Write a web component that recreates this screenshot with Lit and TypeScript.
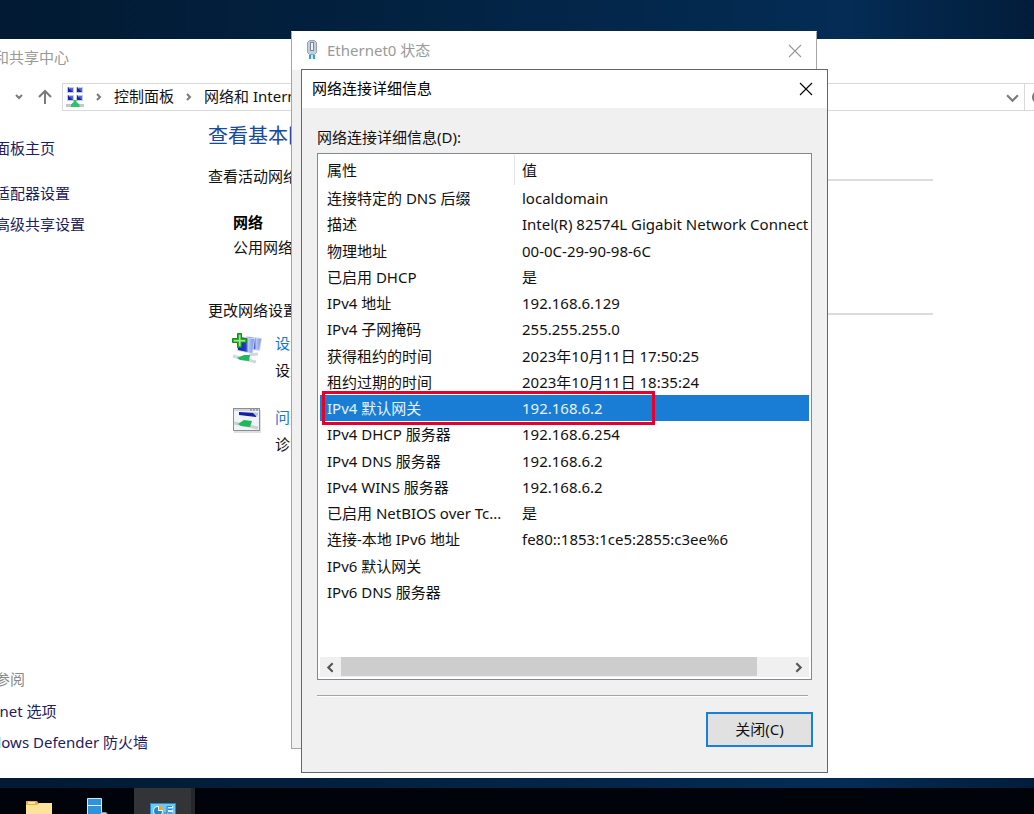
import { LitElement, html, css, svg, nothing } from "lit";
import { customElement, property } from "lit/decorators.js";

interface Detail {
  name: string;
  value: string;
  selected?: boolean;
}

const DETAILS: Detail[] = [
  { name: "连接特定的 DNS 后缀", value: "localdomain" },
  { name: "描述", value: "Intel(R) 82574L Gigabit Network Connection" },
  { name: "物理地址", value: "00-0C-29-90-98-6C" },
  { name: "已启用 DHCP", value: "是" },
  { name: "IPv4 地址", value: "192.168.6.129" },
  { name: "IPv4 子网掩码", value: "255.255.255.0" },
  { name: "获得租约的时间", value: "2023年10月11日 17:50:25" },
  { name: "租约过期的时间", value: "2023年10月11日 18:35:24" },
  { name: "IPv4 默认网关", value: "192.168.6.2", selected: true },
  { name: "IPv4 DHCP 服务器", value: "192.168.6.254" },
  { name: "IPv4 DNS 服务器", value: "192.168.6.2" },
  { name: "IPv4 WINS 服务器", value: "192.168.6.2" },
  { name: "已启用 NetBIOS over Tc...", value: "是" },
  { name: "连接-本地 IPv6 地址", value: "fe80::1853:1ce5:2855:c3ee%6" },
  { name: "IPv6 默认网关", value: "" },
  { name: "IPv6 DNS 服务器", value: "" },
];

const base = css`
  :host,
  * {
    box-sizing: border-box;
  }
  button {
    font: inherit;
    color: inherit;
    background: none;
    border: 0;
    padding: 0;
    display: flex;
    align-items: center;
    justify-content: center;
  }
  a {
    text-decoration: none;
    color: inherit;
  }
  h1,
  h2,
  p {
    margin: 0;
    font-weight: 400;
    font-size: inherit;
  }
  svg {
    display: block;
    flex: none;
  }
`;

const closeIcon = html`<svg width="14" height="14" viewBox="0 0 14 14" aria-hidden="true">
  <path d="M1 1L13 13M13 1L1 13" stroke="currentColor" stroke-width="1.1" fill="none" />
</svg>`;

const chevron = (d: string, size = 12, width = 2) => html`<svg
  width=${size}
  height=${size}
  viewBox="0 0 12 12"
  aria-hidden="true"
>
  ${svg`<path d=${d} stroke="currentColor" stroke-width=${width} fill="none" />`}
</svg>`;

const RIGHT = "M4 2L8 6L4 10";
const SMALL_RIGHT = "M4 3L7 6L4 9";
const LEFT = "M8 2L4 6L8 10";
const DOWN = "M1 4L6 9L11 4";

@customElement("sharing-center")
export class SharingCenter extends LitElement {
  static styles = [
    base,
    css`
      :host {
        display: flex;
        flex-direction: column;
        background: #fff;
        color: #111;
        white-space: nowrap;
      }
      .title {
        padding: 8px 0 0 24px;
        line-height: 20px;
        color: #999;
      }
      .bar {
        display: flex;
        align-items: center;
        height: 28px;
        margin-top: 16px;
        padding-left: 73px;
        color: #7a7a7a;
      }
      .up {
        margin: 0 9px 0 12px;
      }
      .address {
        flex: 1;
        display: flex;
        align-items: center;
        height: 28px;
        border: 1px solid #d9d9d9;
        padding: 0 5px 0 3px;
        gap: 9px;
        line-height: 18px;
      }
      .crumb {
        color: #111;
        padding-bottom: 2px;
      }
      .drop {
        margin-left: auto;
      }
      .refresh {
        height: 28px;
        width: 29px;
        border: 1px solid #d9d9d9;
        border-left: 0;
      }
      .columns {
        flex: 1;
        display: flex;
        min-height: 0;
      }
      .side {
        width: 243px;
        padding: 27px 0 25px 25px;
        display: flex;
        flex-direction: column;
        line-height: 21px;
        color: #1c2060;
      }
      .side a + a {
        margin-top: 10px;
      }
      .side .first {
        margin-bottom: 14px;
      }
      .also {
        margin-top: auto;
        margin-bottom: 11px;
        color: #8a8a8a;
      }
      .main {
        flex: 1;
        padding: 11px 121px 0 25px;
        line-height: 21px;
      }
      .heading {
        font-size: 20px;
        line-height: 28px;
        color: #1848a0;
      }
      .section {
        display: flex;
        gap: 10px;
        align-items: flex-end;
        margin-top: 16px;
      }
      .rule {
        flex: 1;
        height: 2px;
        margin-bottom: 6px;
        background: #dcdcdc;
      }
      .network {
        padding: 23px 0 0 25px;
        line-height: 25px;
        margin-bottom: 40px;
      }
      .network b {
        display: block;
        color: #000;
      }
      .task {
        display: flex;
        gap: 13px;
        padding-left: 24px;
        margin-top: 9px;
        line-height: 27px;
      }
      .task svg {
        margin-top: 3px;
      }
      .task + .task {
        margin-top: 20px;
      }
      .task a {
        color: #1a76d2;
      }
    `,
  ];

  render() {
    return html`
      <h1 class="title">网络和共享中心</h1>
      <nav class="bar">
        ${chevron("M3 4L6 7L9 4")}
        <svg class="up" width="16" height="16" viewBox="0 0 16 16" aria-hidden="true">
          <path d="M8 15V2M2 8L8 2L14 8" stroke="currentColor" stroke-width="2" fill="none" />
        </svg>
        <div class="address">
          <svg width="18" height="20" viewBox="0 0 18 20" aria-hidden="true">
            <path fill="#c4cde0" d="M1 0h7v6H1zM10 0h7v6h-7zM1 8h7v6H1zM10 8h7v6h-7z" />
            <path fill="#1526b4" d="M2 0l5 5H2zM11 0l5 5h-5zM2 8l5 5H2zM11 8l5 5h-5z" />
            <path fill="#1526b4" opacity=".6" d="M4 1h3v4H4zM13 1h3v4h-3zM4 9h3v4H4zM13 9h3v4h-3z" />
            <path fill="#c3c9ca" d="M0 17h18v3H0z" />
            <path fill="#2bc46b" d="M7.500 13h3v2l3 2.500v2.500H5V17.500L7.500 15z" />
          </svg>
          ${chevron(SMALL_RIGHT)}<a class="crumb" href="#">控制面板</a>${chevron(SMALL_RIGHT)}<a class="crumb" href="#">网络和 Internet</a>
          <button class="drop" aria-label="以前的位置">${chevron(DOWN, 13)}</button>
        </div>
        <button class="refresh" aria-label="刷新">
          <svg width="16" height="16" viewBox="0 0 16 16" aria-hidden="true">
            <path d="M14 8A6 6 0 1 1 11 3M11 0V4H15" stroke="currentColor" stroke-width="2" fill="none" />
          </svg>
        </button>
      </nav>
      <div class="columns">
        <nav class="side">
          <a class="first" href="#">控制面板主页</a>
          <a href="#">更改适配器设置</a>
          <a href="#">更改高级共享设置</a>
          <p class="also">另请参阅</p>
          <a href="#">Internet 选项</a>
          <a href="#">Windows Defender 防火墙</a>
        </nav>
        <section class="main">
          <h2 class="heading">查看基本网络信息并设置连接</h2>
          <div class="section"><span>查看活动网络</span><span class="rule"></span></div>
          <div class="network"><b>网络</b>公用网络</div>
          <div class="section"><span>更改网络设置</span><span class="rule"></span></div>
          <div class="task">
            <svg width="30" height="32" viewBox="0 0 30 32" aria-hidden="true">
              <defs>
                <linearGradient id="scr" x1="0" x2="1">
                  <stop offset="0" stop-color="#0b1f9c" />
                  <stop offset=".5" stop-color="#2340c8" />
                  <stop offset=".65" stop-color="#b8c8f5" />
                  <stop offset="1" stop-color="#7d92e6" />
                </linearGradient>
              </defs>
              <path fill="#d5dcec" d="M14 3L30 5L28 18L14 16z" />
              <path fill="url(#scr)" d="M15 4L29 6L27 17L15 15z" />
              <path fill="#d5dcec" d="M5 3L23 5L21 21L5 18z" />
              <path fill="url(#scr)" d="M6 4L22 6L20 20L6 17z" />
              <path stroke="#d3d8d8" stroke-width="3" fill="none" d="M1 23L24 29M17 22L26 21" />
              <path fill="#1fb860" d="M5 25L12 22L18 22L17 28L8 27z" />
              <path fill="#2fae2f" stroke="#178a1c" d="M5.500 .500H9.500V5.500H14.500V9.500H9.500V14.500H5.500V9.500H.500V5.500H5.500z" />
              <path fill="#9fe88a" d="M7 2H8.500V7H13V8.500H8.500V13H7V8.500H2V7H7z" />
            </svg>
            <div><a href="#">设置新的连接或网络</a><p>设置宽带、拨号或 VPN 连接</p></div>
          </div>
          <div class="task">
            <svg width="30" height="30" viewBox="0 0 30 30" aria-hidden="true">
              <rect x="2" y="3" width="27" height="23" fill="#000" opacity=".12" />
              <rect x="1.500" y="1.500" width="26" height="22" fill="#f2f3f4" stroke="#888e99" />
              <path fill="#d3d6dc" d="M2 2H27V4H2z" />
              <path stroke="#777" stroke-dasharray="2 1" d="M18 3H26" />
              <path fill="#13239c" d="M7 5L26 6L24 10L7 8z" />
              <path fill="#b8c8f5" d="M21 6L26 6L25 10z" />
              <path stroke="#c9d0d0" stroke-width="3" d="M2 16L26 21" />
              <path fill="#1fb860" d="M6 17L12 13L20 14L18 20L9 19z" />
            </svg>
            <div><a href="#">问题疑难解答</a><p>诊断并修复网络问题</p></div>
          </div>
        </section>
      </div>
    `;
  }
}

@customElement("tool-window")
export class ToolWindow extends LitElement {
  @property() heading = "";
  @property({ type: Boolean }) icon = false;

  static styles = [
    base,
    css`
      :host {
        display: flex;
        flex-direction: column;
        background: #f0f0f0;
      }
      .title {
        display: flex;
        align-items: center;
        gap: 5px;
        height: 38px;
        flex: none;
        padding: 0 14px 0 10px;
        background: #fff;
      }
      .title h1 {
        padding-bottom: 3px;
      }
      .close {
        margin-left: auto;
      }
    `,
  ];

  render() {
    return html`
      <header class="title">
        ${this.icon
          ? html`<svg width="20" height="24" viewBox="0 0 20 24" aria-hidden="true">
              <path d="M5.500 3.500L7.500 1.500H12.500L14.500 3.500V13.500L12.500 15.500H7.500L5.500 13.500z" fill="#c3cedb" stroke="#94a2b4" />
              <rect x="8.500" y="3.500" width="3" height="8" fill="#f2f6fa" stroke="#75859a" />
              <path stroke="#2ba3cf" stroke-width="2" d="M8 16V20M12 16V20" />
              <path stroke="#8fd0e8" d="M10 16V19" />
            </svg>`
          : nothing}
        <h1>${this.heading}</h1>
        <button class="close" aria-label="关闭">${closeIcon}</button>
      </header>
      <slot></slot>
    `;
  }
}

@customElement("connection-details")
export class ConnectionDetails extends LitElement {
  static styles = [
    base,
    css`
      :host {
        flex: 1;
        display: flex;
        flex-direction: column;
        padding: 18px 15px 25px;
        color: #111;
      }
      .label {
        line-height: 22px;
        margin-bottom: 5px;
      }
      .list {
        flex: 1;
        display: flex;
        flex-direction: column;
        justify-content: space-between;
        border: 1px solid #828790;
        background: #fff;
        padding: 1px 2px 2px;
      }
      .table {
        width: 100%;
        height: 450px;
        table-layout: fixed;
        border-collapse: separate;
        border-spacing: 0;
        line-height: 22px;
      }
      .table th,
      .table td {
        padding: 0 0 0 7px;
        text-align: left;
        font-weight: 400;
        white-space: nowrap;
        overflow: hidden;
      }
      .table thead th {
        height: 30px;
      }
      .table .name {
        width: 195px;
      }
      .table thead .name {
        border-right: 1px solid #e3e3e3;
      }
      .selected {
        position: relative;
        background: #1a7dd5;
        color: #e6f2fc;
      }
      .mark {
        position: absolute;
        inset: -4px 154px -4px 2px;
        border: 3px solid #e8002d;
      }
      .scroll {
        display: flex;
        height: 20px;
        background: #f0f0f0;
        color: #555;
      }
      .scroll button {
        width: 21px;
      }
      .track {
        flex: 1;
      }
      .thumb {
        width: 93%;
        height: 19px;
        background: #cdcdcd;
      }
      .rule {
        height: 2px;
        margin: 15px 4px 15px 0;
        background: #a5a5a5;
        border-bottom: 1px solid #fff;
      }
      .ok {
        align-self: flex-end;
        width: 107px;
        height: 35px;
        margin-right: -1px;
        padding-bottom: 2px;
        border: 2px solid #1a7fd6;
        background: #e1e1e1;
      }
    `,
  ];

  render() {
    return html`
      <p class="label" id="label">网络连接详细信息(D):</p>
      <div class="list">
        <table class="table" aria-labelledby="label">
          <thead>
            <tr><th class="name">属性</th><th>值</th></tr>
          </thead>
          <tbody>
            ${DETAILS.map(
              (d) => html`<tr class=${d.selected ? "selected" : ""}>
                <td>${d.name}${d.selected ? html`<span class="mark"></span>` : nothing}</td>
                <td>${d.value}</td>
              </tr>`
            )}
          </tbody>
        </table>
        <div class="scroll">
          <button aria-label="向左滚动">${chevron(LEFT, 13)}</button>
          <div class="track"><div class="thumb"></div></div>
          <button aria-label="向右滚动">${chevron(RIGHT, 13)}</button>
        </div>
      </div>
      <div class="rule"></div>
      <button class="ok">关闭(C)</button>
    `;
  }
}

@customElement("task-bar")
export class TaskBar extends LitElement {
  static styles = [
    base,
    css`
      :host {
        display: flex;
        gap: 4px;
        height: 26px;
        padding-left: 10px;
        overflow: hidden;
        background: #00030a;
      }
      button {
        width: 58px;
        height: 50px;
        flex: none;
      }
      .active {
        width: 61px;
        background: #333438;
        border-right: 4px solid #26272b;
      }
    `,
  ];

  render() {
    return html`
      <button aria-label="文件资源管理器">
        <svg width="28" height="24" viewBox="0 0 28 24" aria-hidden="true">
          <path fill="#e8b23c" d="M1 0H12L14 3H27V25H1z" />
          <path fill="#fce6a0" d="M3 1H10V3H3z" />
          <path fill="#ffe39a" d="M1 4H12L14 2H27V25H1z" />
        </svg>
      </button>
      <button aria-label="服务器管理器">
        <svg width="32" height="30" viewBox="0 0 32 30" aria-hidden="true">
          <path fill="#2f93dc" stroke="#cfe8fa" d="M2.500 .500H16.500V30H2.500z" />
          <path stroke="#e6f4ff" d="M2 7.500H17" />
          <path fill="#8a98a2" d="M14 16L17 14H21L23 16V30H14z" />
          <path fill="#c8d2d8" d="M16 15H21V16H16z" />
        </svg>
      </button>
      <button class="active" aria-label="控制面板">
        <svg width="26" height="20" viewBox="0 0 26 20" aria-hidden="true">
          <rect x=".500" y=".500" width="25" height="21" fill="#6cc9f5" stroke="#2487c6" />
          <circle cx="8" cy="8" r="5" fill="#e6f5fd" />
          <path fill="#2487c6" d="M8 8L8 4A4 4 0 1 0 12 8z" />
          <path fill="#f6a623" d="M9 7V2A5 5 0 0 1 13 7z" />
          <path stroke="#fff" stroke-width="1.500" fill="none" d="M18 4H23M18 8H23" />
          <path stroke="#2487c6" fill="none" d="M14 10H17V3.500H22M18 6.500H22M18 10H22" />
        </svg>
      </button>
    `;
  }
}

@customElement("app-root")
export class AppRoot extends LitElement {
  static styles = css`
    :host {
      display: flex;
      flex-direction: column;
      position: relative;
      height: 100vh;
      overflow: hidden;
      font: 15px/20px "Noto Sans", "Noto Sans CJK SC", sans-serif;
      background: linear-gradient(90deg, #021a33 0%, #02213f 35%, #042c55 82%, #021d3a 100%);
    }
    .center {
      position: absolute;
      inset: 39px -20px 36px -60px;
    }
    .status {
      position: absolute;
      left: 291px;
      top: 31px;
      width: 526px;
      height: 718px;
      border: 1px solid #a5a5a5;
      border-top-color: #fff;
      color: #999;
    }
    .details {
      position: absolute;
      left: 301px;
      top: 69px;
      width: 527px;
      height: 704px;
      border: 1px solid #666;
      color: #000;
    }
    .bar {
      margin-top: auto;
    }
  `;

  render() {
    return html`
      <sharing-center class="center"></sharing-center>
      <tool-window class="status" heading="Ethernet0 状态" icon></tool-window>
      <tool-window class="details" heading="网络连接详细信息">
        <connection-details></connection-details>
      </tool-window>
      <task-bar class="bar"></task-bar>
    `;
  }
}
